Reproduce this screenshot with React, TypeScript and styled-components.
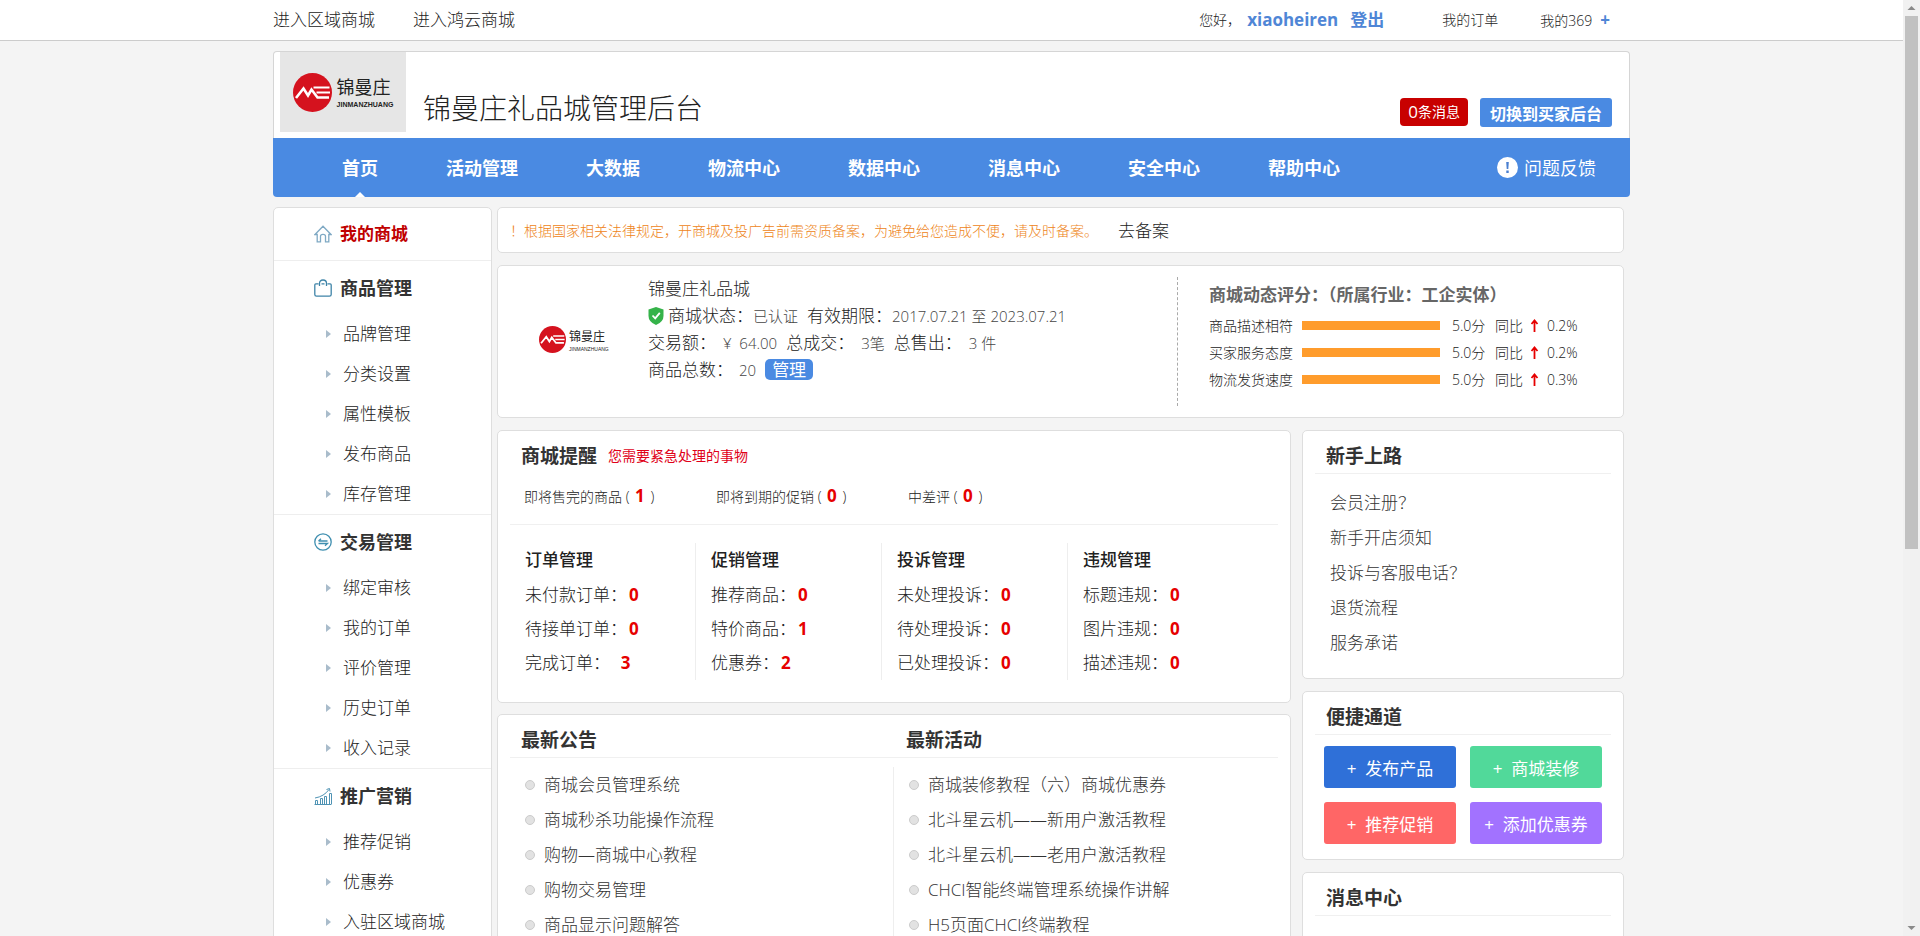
import React from "react";
import styled, { createGlobalStyle } from "styled-components";

const GlobalStyle = createGlobalStyle`
  *, *::before, *::after { box-sizing: border-box; }
  body {
    margin: 0;
    background: #f4f4f4;
    color: #222;
    font-family: "Open Sans", "Noto Sans CJK SC", sans-serif;
    font-size: 17px;
    font-weight: 300;
    line-height: 24px;
  }
  h1, h2, h3, p, ul { margin: 0; padding: 0; }
  h2 { color: #333; }
  ul { list-style: none; }
  a { color: inherit; text-decoration: none; }
  b { font-weight: 700; }
  button { font-family: inherit; border: 0; padding: 0; cursor: pointer; }
`;

const Shell = styled.div`
  display: flex;
  height: 100vh;
`;

const Viewport = styled.div`
  flex: 1;
  min-width: 0;
  overflow: hidden;
`;

const Container = styled.div`
  width: 100%;
  max-width: 1357px;
  margin: 0 auto;
`;

/* Scroll rail */
const Rail = styled.div`
  flex: none;
  width: 17px;
  padding: 0 2px;
  background: #f1f1f1;
  display: flex;
  flex-direction: column;
`;
const RailArrow = styled.svg`
  flex: none;
  width: 13px;
  height: 16px;
  fill: #8a8a8a;
`;
const RailTrack = styled.div`
  flex: 1;
`;
const RailThumb = styled.div`
  height: 59%;
  background: #c1c1c1;
`;

/* Top bar */
const TopBar = styled.div`
  background: #fff;
  border-bottom: 1px solid #ccc;
`;
const TopInner = styled(Container)`
  display: flex;
  align-items: center;
  justify-content: space-between;
  height: 40px;
  padding-right: 20px;
`;
const TopLinks = styled.nav`
  display: flex;
  gap: 38px;
`;
const Account = styled.div`
  display: flex;
  align-items: center;
  font-size: 14px;
`;
const AccountLink = styled.a<{ $gap: number }>`
  margin-left: ${(p) => p.$gap}px;
  color: #4f86d6;
  font-size: 17px;
  font-weight: 700;
`;
const AccountMenu = styled.a<{ $gap: number }>`
  margin-left: ${(p) => p.$gap}px;
  b { margin-left: 8px; color: #4f86d6; font-size: 17px; }
`;

/* Header */
const Header = styled(Container)`
  margin-top: 10px;
`;
const Brand = styled.div`
  display: flex;
  height: 87px;
  padding: 0 17px 0 6px;
  background: #fff;
  border: 1px solid #d5d5d5;
  border-bottom: 0;
  border-radius: 4px 4px 0 0;
`;
const BrandLogo = styled.div`
  display: flex;
  align-items: center;
  justify-content: center;
  width: 126px;
  height: 80px;
  background: #e6e6e6;
`;
const SiteTitle = styled.h1`
  margin: 36px auto 0 17px;
  font-size: 28px;
  line-height: 40px;
  font-weight: 300;
`;
const MessageBadge = styled.a`
  display: flex;
  align-items: center;
  height: 28px;
  margin: 46px 12px 0 0;
  padding: 0 8px;
  border-radius: 4px;
  background: #c80000;
  color: #fff;
  font-size: 14px;
  font-weight: 400;
  span { font-size: 17px; }
`;
const SwitchButton = styled.button`
  height: 29px;
  margin-top: 46px;
  padding: 0 10px;
  border-radius: 3px;
  background: #4a8ae2;
  color: #fff;
  font-size: 16px;
  font-weight: 700;
`;

const NavBar = styled.nav`
  display: flex;
  height: 59px;
  padding: 0 34px 0 35px;
  border-radius: 0 0 4px 4px;
  background: #4a8ae2;
  color: #fff;
  font-size: 18px;
`;
const NavItem = styled.a<{ $active?: boolean }>`
  position: relative;
  display: flex;
  align-items: center;
  padding: 0 34px;
  font-weight: 700;
  &::after {
    content: "";
    display: ${(p) => (p.$active ? "block" : "none")};
    position: absolute;
    left: 50%;
    bottom: 0;
    margin-left: -5px;
    border: 5px solid transparent;
    border-top: 0;
    border-bottom-color: #fff;
  }
`;
const Feedback = styled.a`
  display: flex;
  align-items: center;
  gap: 6px;
  margin-left: auto;
  font-weight: 400;
`;

/* Logo */
const LogoBox = styled.div<{ $small?: boolean }>`
  display: flex;
  align-items: center;
  gap: ${(p) => (p.$small ? 3 : 5)}px;
  color: #222;
  > svg {
    width: ${(p) => (p.$small ? 27 : 39)}px;
    height: ${(p) => (p.$small ? 27 : 39)}px;
  }
`;
const LogoWords = styled.div<{ $small?: boolean }>`
  font-size: ${(p) => (p.$small ? 12 : 18)}px;
  font-weight: 400;
  line-height: ${(p) => (p.$small ? 18 : 26)}px;
  small {
    display: block;
    font-family: "Liberation Sans", sans-serif;
    font-size: ${(p) => (p.$small ? 5 : 7)}px;
    font-weight: ${(p) => (p.$small ? 400 : 700)};
    line-height: ${(p) => (p.$small ? 6 : 10)}px;
  }
`;

/* Body */
const Body = styled(Container)`
  display: flex;
  align-items: flex-start;
  gap: 5px;
  margin-top: 10px;
  padding-right: 6px;
`;
const Card = styled.section`
  background: #fff;
  border: 1px solid #dedede;
  border-radius: 5px;
`;
const Sidebar = styled(Card)`
  flex: none;
  width: 219px;
`;
const MenuGroup = styled.div`
  border-top: 1px solid #eee;
  &:first-child { border-top: 0; }
`;
const MenuHead = styled.a<{ $current?: boolean }>`
  display: flex;
  align-items: center;
  gap: 8px;
  height: ${(p) => (p.$current ? 52 : 53)}px;
  padding-left: 40px;
  color: ${(p) => (p.$current ? "#c00000" : "#333")};
  font-size: ${(p) => (p.$current ? 17 : 18)}px;
  font-weight: 700;
`;
const MenuItem = styled.a`
  display: flex;
  align-items: center;
  gap: 12px;
  height: 40px;
  padding-left: 52px;
  &::before {
    content: "";
    border: 4px solid transparent;
    border-left: 5px solid #a9bccb;
    border-right: 0;
  }
`;

const Main = styled.main`
  flex: 1;
  min-width: 0;
  display: flex;
  flex-direction: column;
  gap: 12px;
`;
const Notice = styled(Card)`
  display: flex;
  align-items: center;
  gap: 20px;
  height: 46px;
  padding: 2px 0 0 12px;
  p { color: #ee8420; font-size: 14px; }
`;

const Shop = styled(Card)`
  display: flex;
  height: 153px;
`;
const ShopLogo = styled.div`
  flex: none;
  display: flex;
  align-items: center;
  width: 150px;
  padding-left: 41px;
  padding-bottom: 4px;
`;
const ShopInfo = styled.div`
  flex: 1;
  padding-top: 9px;
`;
const InfoLine = styled.div`
  display: flex;
  align-items: center;
  height: 27px;
`;
const Shield = styled.svg`
  width: 16px;
  height: 18px;
  margin-right: 4px;
`;
const Value = styled.span<{ $before?: number }>`
  margin: 0 9px 0 ${(p) => p.$before ?? 0}px;
  color: #444;
  font-size: 15px;
`;
const ManageButton = styled.button`
  width: 48px;
  height: 21px;
  border-radius: 5px;
  background: #4a8ae2;
  color: #fff;
  font-size: 17px;
  line-height: 21px;
`;
const Scores = styled.div`
  flex: none;
  width: 446px;
  margin: 11px 0;
  padding: 6px 0 0 31px;
  border-left: 1px dashed #aaa;
  h2 { font-size: 17px; color: #666; }
`;
const ScoreRow = styled.div`
  display: flex;
  align-items: center;
  height: 27px;
  font-size: 14px;
  &:nth-child(2) { margin-top: 5px; }
`;
const ScoreLabel = styled.span`
  width: 93px;
`;
const ScoreTrack = styled.span`
  width: 138px;
  height: 9px;
  margin-right: 12px;
`;
const ScoreFill = styled.span`
  display: block;
  height: 100%;
  background: #ff9c2c;
`;
const ScorePart = styled.span<{ $width: number }>`
  display: inline-flex;
  align-items: center;
  width: ${(p) => p.$width}px;
`;

const Columns = styled.div`
  display: flex;
  align-items: flex-start;
  gap: 11px;
`;
const Wide = styled.div`
  flex: 1;
  min-width: 0;
  display: flex;
  flex-direction: column;
  gap: 11px;
`;
const Narrow = styled.div`
  flex: none;
  width: 322px;
  display: flex;
  flex-direction: column;
  gap: 12px;
`;
const Panel = styled(Card)`
  padding: 0 12px;
`;
const PanelHead = styled.header<{ $line?: boolean }>`
  display: flex;
  align-items: center;
  gap: ${(p) => (p.$line ? 24 : 11)}px;
  height: ${(p) => (p.$line ? 43 : 50)}px;
  padding: ${(p) => (p.$line ? 7 : 0)}px 11px 0;
  border-bottom: ${(p) => (p.$line ? "1px solid #f0f0f0" : "0")};
  h2 { font-size: 19px; flex: ${(p) => (p.$line ? "1" : "none")}; }
  p { color: #e00018; font-size: 14px; font-weight: 400; }
`;
const Urgent = styled.ul`
  display: grid;
  grid-template-columns: repeat(auto-fill, 192px);
  height: 44px;
  padding-left: 14px;
  border-bottom: 1px solid #f0f0f0;
  font-size: 14px;
  line-height: 30px;
`;
const Count = styled.b`
  margin: 0 2px;
  color: #e60000;
  font-size: 17px;
`;
const Stats = styled.div`
  display: grid;
  grid-template-columns: repeat(4, 186px);
  padding: 18px 0 22px;
`;
const StatColumn = styled.div`
  height: 137px;
  padding-left: 15px;
  border-right: 1px solid #eee;
  line-height: 35px;
  &:last-child { border-right: 0; }
  h3 { font-size: 17px; line-height: 34px; font-weight: 500; }
`;
const StatRow = styled.div`
  height: 34px;
  white-space: pre;
`;

const NewsGrid = styled.div`
  display: grid;
  grid-template-columns: 1fr 1fr;
  padding: 9px 0 20px;
`;
const NewsList = styled.ul`
  padding-left: 15px;
  border-right: 1px solid #eee;
  &:last-child { border-right: 0; }
`;
const NewsItem = styled.li`
  display: flex;
  align-items: center;
  gap: 9px;
  height: 35px;
  color: #333;
  &::before {
    content: "";
    width: 10px;
    height: 10px;
    border: 1px solid #ccc;
    border-radius: 50%;
    background: #e2e2e2;
  }
`;
const HelpList = styled.ul`
  padding: 11px 0 18px 15px;
  color: #333;
  line-height: 35px;
`;
const QuickGrid = styled.div`
  display: grid;
  grid-template-columns: 1fr 1fr;
  gap: 14px;
  padding: 11px 9px 15px;
`;
const QuickButton = styled.button<{ $color: string }>`
  height: 42px;
  border-radius: 3px;
  background: ${(p) => p.$color};
  color: #fff;
  font-size: 17px;
`;

const Logo = ({ small }: { small?: boolean }) => (
  <LogoBox $small={small}>
    <svg viewBox="0 0 39 39" aria-hidden="true">
      <circle cx="19.500" cy="19.500" r="19.500" fill="#d5121e" />
      <path d="M3 25 L10.500 15.500 L15 22.500 L18.500 16.500 L24.500 24.500 H36" fill="none" stroke="#fff" strokeWidth="2.600" />
      <path d="M20.500 14.500 H36.500 M23.500 19.500 H37" fill="none" stroke="#fff" strokeWidth="2" />
    </svg>
    <LogoWords $small={small}>
      锦曼庄
      <small>JINMANZHUANG</small>
    </LogoWords>
  </LogoBox>
);

const iconProps = { width: 18, height: 18, viewBox: "0 0 18 18", fill: "none", strokeWidth: 1.3, "aria-hidden": true } as const;

const HomeIcon = () => (
  <svg {...iconProps} stroke="#7fa9c4">
    <path d="M1 9.500 L9 1.300 L17 9.500 H14.800 V16.800 H11.500 V11.300 Q11.500 9.300 9 9.300 Q6.500 9.300 6.500 11.300 V16.800 H3.200 V9.500 Z" />
  </svg>
);
const BagIcon = () => (
  <svg {...iconProps} stroke="#3f84a8">
    <path d="M4.500 4.800 H1.800 Q0.800 4.800 0.800 6 V15.500 Q0.800 17.200 2.500 17.200 H15.500 Q17.200 17.200 17.200 15.500 V6 Q17.200 4.800 16.200 4.800 H13.500 M7.500 4.800 H10.500 M5.500 7 V4.500 Q5.500 1 9 1 Q12.500 1 12.500 4.500 V7" />
  </svg>
);
const TradeIcon = () => (
  <svg {...iconProps} stroke="#3f8fb0">
    <circle cx="9" cy="9" r="8.200" />
    <path d="M4.500 8 H13.500 M7 5.800 L4.500 8 M4.500 10.500 H13.500 L11 12.700" />
  </svg>
);
const ChartIcon = () => (
  <svg {...iconProps} stroke="#4f93b4" strokeWidth={1}>
    <path d="M0.500 17.500 H17.500 M1.500 17 V13.500 H3.500 V17 M6.500 17 V11.500 H8.500 V17 M10.500 17 V9.500 H12.500 V17 M15.500 17 V6.500 H17.500 V17 M1 11 Q10 9.500 15 2.500 M12.500 2.500 L15.500 1.500 L16 4.500" />
  </svg>
);

const topNav = ["首页", "活动管理", "大数据", "物流中心", "数据中心", "消息中心", "安全中心", "帮助中心"];

const menu = [
  { title: "商品管理", icon: <BagIcon />, items: ["品牌管理", "分类设置", "属性模板", "发布商品", "库存管理"] },
  { title: "交易管理", icon: <TradeIcon />, items: ["绑定审核", "我的订单", "评价管理", "历史订单", "收入记录"] },
  { title: "推广营销", icon: <ChartIcon />, items: ["推荐促销", "优惠券", "入驻区域商城"] },
];

const scores = [
  { label: "商品描述相符", score: 5, change: "0.2%" },
  { label: "买家服务态度", score: 5, change: "0.2%" },
  { label: "物流发货速度", score: 5, change: "0.3%" },
];

const urgent: [string, number][] = [["即将售完的商品", 1], ["即将到期的促销", 0], ["中差评", 0]];

const stats: { title: string; rows: [string, number][] }[] = [
  { title: "订单管理", rows: [["未付款订单：", 0], ["待接单订单：", 0], ["完成订单：  ", 3]] },
  { title: "促销管理", rows: [["推荐商品：", 0], ["特价商品：", 1], ["优惠券：", 2]] },
  { title: "投诉管理", rows: [["未处理投诉：", 0], ["待处理投诉：", 0], ["已处理投诉：", 0]] },
  { title: "违规管理", rows: [["标题违规：", 0], ["图片违规：", 0], ["描述违规：", 0]] },
];

const news = [
  ["商城会员管理系统", "商城秒杀功能操作流程", "购物—商城中心教程", "购物交易管理", "商品显示问题解答"],
  ["商城装修教程（六）商城优惠券", "北斗星云机——新用户激活教程", "北斗星云机——老用户激活教程", "CHCI智能终端管理系统操作讲解", "H5页面CHCI终端教程"],
];

const help = ["会员注册？", "新手开店须知", "投诉与客服电话？", "退货流程", "服务承诺"];

const quick: [string, string][] = [
  ["发布产品", "#2f70d8"],
  ["商城装修", "#51d99a"],
  ["推荐促销", "#ff6666"],
  ["添加优惠券", "#a272ff"],
];

export default function App() {
  return (
    <>
      <GlobalStyle />
      <Shell>
        <Viewport>
          <TopBar>
            <TopInner>
              <TopLinks>
                <a href="#">进入区域商城</a>
                <a href="#">进入鸿云商城</a>
              </TopLinks>
              <Account>
                <span>您好，</span>
                <AccountLink href="#" $gap={6}>xiaoheiren</AccountLink>
                <AccountLink href="#" $gap={12}>登出</AccountLink>
                <AccountMenu href="#" $gap={58}>我的订单</AccountMenu>
                <AccountMenu href="#" $gap={42}>我的369<b>+</b></AccountMenu>
              </Account>
            </TopInner>
          </TopBar>

          <Header as="header">
            <Brand>
              <BrandLogo><Logo /></BrandLogo>
              <SiteTitle>锦曼庄礼品城管理后台</SiteTitle>
              <MessageBadge href="#"><span>0</span>条消息</MessageBadge>
              <SwitchButton type="button">切换到买家后台</SwitchButton>
            </Brand>
            <NavBar>
              {topNav.map((t, i) => (
                <NavItem key={t} href="#" $active={i === 0}>{t}</NavItem>
              ))}
              <Feedback href="#">
                <svg width="21" height="21" viewBox="0 0 21 21" aria-hidden="true">
                  <circle cx="10.500" cy="10.500" r="10.500" fill="#fff" />
                  <path d="M9.200 5 H11.800 L11.300 12 H9.700 Z M9.300 13.500 H11.700 V16 H9.300 Z" fill="#4a7fd0" />
                </svg>
                问题反馈
              </Feedback>
            </NavBar>
          </Header>

          <Body>
            <Sidebar as="aside">
              <MenuGroup>
                <MenuHead href="#" $current><HomeIcon />我的商城</MenuHead>
              </MenuGroup>
              {menu.map((g) => (
                <MenuGroup key={g.title}>
                  <MenuHead href="#">{g.icon}{g.title}</MenuHead>
                  {g.items.map((t) => <MenuItem key={t} href="#">{t}</MenuItem>)}
                </MenuGroup>
              ))}
            </Sidebar>

            <Main>
              <Notice>
                <p>！根据国家相关法律规定，开商城及投广告前需资质备案，为避免给您造成不便，请及时备案。</p>
                <a href="#">去备案</a>
              </Notice>

              <Shop>
                <ShopLogo><Logo small /></ShopLogo>
                <ShopInfo>
                  <InfoLine>锦曼庄礼品城</InfoLine>
                  <InfoLine>
                    <Shield viewBox="0 0 16 18" aria-hidden="true">
                      <path d="M8 0 L15.500 2.500 V9 Q15.500 15 8 18 Q0.500 15 0.500 9 V2.500 Z" fill="#35b34a" />
                      <path d="M4.500 8.500 L7.200 11.300 L11.800 5.800" fill="none" stroke="#fff" strokeWidth="1.800" />
                    </Shield>
                    商城状态：<Value>已认证</Value>有效期限：<Value>2017.07.21 至 2023.07.21</Value>
                  </InfoLine>
                  <InfoLine>
                    交易额：<Value $before={7}>¥&nbsp; 64.00</Value>总成交：<Value $before={7}>3笔</Value>总售出：<Value $before={7}>3 件</Value>
                  </InfoLine>
                  <InfoLine>
                    商品总数：<Value $before={6}>20</Value>
                    <ManageButton type="button">管理</ManageButton>
                  </InfoLine>
                </ShopInfo>
                <Scores>
                  <h2>商城动态评分：（所属行业：工企实体）</h2>
                  {scores.map((s) => (
                    <ScoreRow key={s.label}>
                      <ScoreLabel>{s.label}</ScoreLabel>
                      <ScoreTrack><ScoreFill style={{ width: `${s.score * 20}%` }} /></ScoreTrack>
                      <ScorePart $width={43}>{s.score.toFixed(1)}分</ScorePart>
                      <ScorePart $width={35}>同比</ScorePart>
                      <ScorePart $width={17}>
                        <svg width="9" height="13" viewBox="0 0 9 13" aria-hidden="true">
                          <path d="M4.500 13 V2 M1.500 5 L4.500 1.500 L7.500 5" fill="none" stroke="#e60000" strokeWidth="1.800" />
                        </svg>
                      </ScorePart>
                      {s.change}
                    </ScoreRow>
                  ))}
                </Scores>
              </Shop>

              <Columns>
                <Wide>
                  <Panel>
                    <PanelHead>
                      <h2>商城提醒</h2>
                      <p>您需要紧急处理的事物</p>
                    </PanelHead>
                    <Urgent>
                      {urgent.map(([t, n]) => <li key={t}>{t} ( <Count>{n}</Count> )</li>)}
                    </Urgent>
                    <Stats>
                      {stats.map((s) => (
                        <StatColumn key={s.title}>
                          <h3>{s.title}</h3>
                          {s.rows.map(([t, n]) => <StatRow key={t}>{t}<Count>{n}</Count></StatRow>)}
                        </StatColumn>
                      ))}
                    </Stats>
                  </Panel>
                  <Panel>
                    <PanelHead $line>
                      <h2>最新公告</h2>
                      <h2>最新活动</h2>
                    </PanelHead>
                    <NewsGrid>
                      {news.map((list) => (
                        <NewsList key={list[0]}>
                          {list.map((t) => <NewsItem key={t}><a href="#">{t}</a></NewsItem>)}
                        </NewsList>
                      ))}
                    </NewsGrid>
                  </Panel>
                </Wide>

                <Narrow>
                  <Panel>
                    <PanelHead $line><h2>新手上路</h2></PanelHead>
                    <HelpList>
                      {help.map((t) => <li key={t}><a href="#">{t}</a></li>)}
                    </HelpList>
                  </Panel>
                  <Panel>
                    <PanelHead $line><h2>便捷通道</h2></PanelHead>
                    <QuickGrid>
                      {quick.map(([t, c]) => <QuickButton key={t} type="button" $color={c}>+&nbsp; {t}</QuickButton>)}
                    </QuickGrid>
                  </Panel>
                  <Panel>
                    <PanelHead $line><h2>消息中心</h2></PanelHead>
                    <HelpList />
                  </Panel>
                </Narrow>
              </Columns>
            </Main>
          </Body>
        </Viewport>
        <Rail aria-hidden="true">
          <RailArrow viewBox="0 0 13 16"><path d="M2.500 10 L6.500 6 L10.500 10 Z" /></RailArrow>
          <RailTrack><RailThumb /></RailTrack>
          <RailArrow viewBox="0 0 13 16"><path d="M2.500 6 L6.500 10 L10.500 6 Z" /></RailArrow>
        </Rail>
      </Shell>
    </>
  );
}
